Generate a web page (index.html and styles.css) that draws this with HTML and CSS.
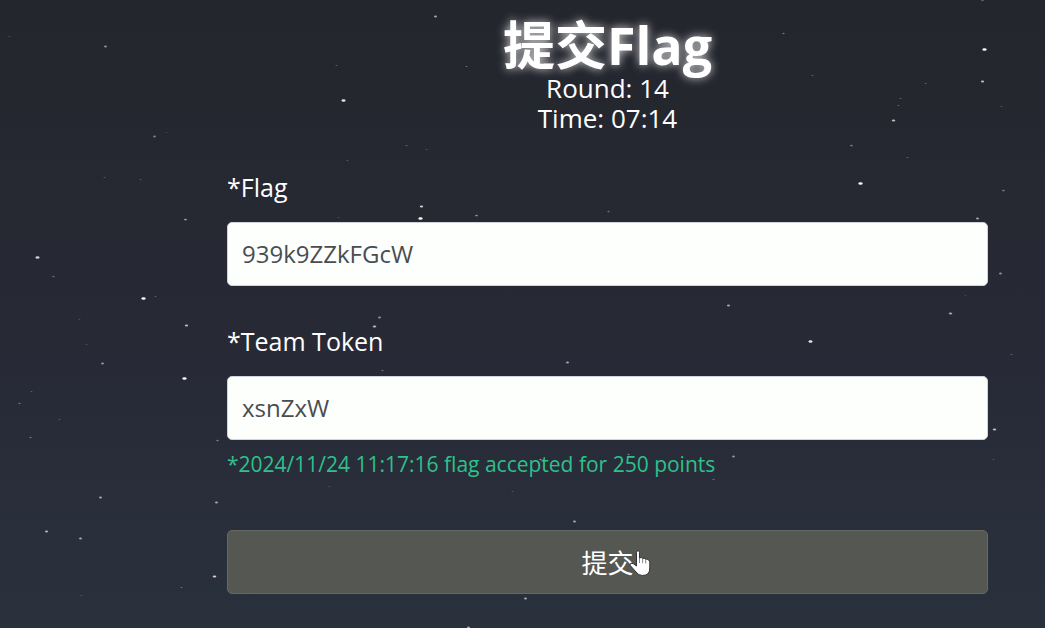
FILE: index.html
```
<!DOCTYPE html>
<html lang="zh-CN">
  <head>
    <meta charset="utf-8">
    <meta name="viewport" content="width=device-width, initial-scale=1">
    <title>提交Flag</title>
    <link rel="stylesheet" href="styles.css">
  </head>
  <body>
    <svg class="stars" aria-hidden="true"></svg>
    <main class="container">
      <header class="header">
        <h1>提交Flag</h1>
        <p>Round: <span id="round">14</span></p>
        <p>Time: <span id="time">07:14</span></p>
      </header>
      <form class="flag-form">
        <div class="form-group">
          <label for="flag">*Flag</label>
          <input type="text" id="flag" value="939k9ZZkFGcW" autocomplete="off" spellcheck="false">
        </div>
        <div class="form-group">
          <label for="token">*Team Token</label>
          <input type="text" id="token" value="xsnZxW" autocomplete="off" spellcheck="false">
          <p class="message" role="status">*2024/11/24 11:17:16 flag accepted for 250 points</p>
        </div>
        <button type="submit" class="submit-btn">
          <span class="submit-text">提交
            <svg class="pointer" viewBox="0 0 22 27" aria-hidden="true">
              <path d="M7.5 2.5 Q7.5 .7 9 .7 Q10.5 .7 10.5 2.5 V8 Q12.7 6.8 13.5 8.5 Q15.4 7.5 16.5 9.3 Q18.2 8.4 19.3 10 Q20.8 10.5 20.8 12.5 V18 Q20.8 25.5 13.5 25.5 Q9.5 25.5 7 22 L1.3 15.5 Q.5 13.8 2 13.2 Q3.8 12.7 7.5 16 Z" fill="#fff" stroke="#333" stroke-width="1"/>
              <path d="M10.5 8v5M13.6 8.7v4.5M16.7 9.5v4" fill="none" stroke="#666" stroke-width=".8"/>
            </svg>
          </span>
        </button>
      </form>
    </main>
    <script src="script.js"></script>
  </body>
</html>
```

FILE: styles.css
```
* {
  margin: 0;
  padding: 0;
  box-sizing: border-box;
}
body {
  min-height: 100vh;
  background: linear-gradient(#24262d, #272935 50%, #29313d) no-repeat;
  font-family: "Open Sans", "Noto Sans CJK SC", sans-serif;
  color: white;
}
.stars {
  position: absolute;
  top: 0;
  left: 0;
  width: 100%;
  height: 100%;
  z-index: -1;
}
.container {
  padding: 17px 57px 34px 227px;
}
.header {
  text-align: center;
  font-size: 26px;
  line-height: 30px;
  margin-bottom: 34px;
}
.header h1 {
  font-size: 52px;
  line-height: 56px;
  font-weight: bold;
  text-shadow: 0 0 10px rgba(255, 255, 255, 0.8);
}
.flag-form {
  display: flex;
  flex-direction: column;
}
.form-group {
  margin-bottom: 35px;
}
.form-group label {
  display: block;
  font-size: 25px;
  line-height: 40px;
  margin-bottom: 15px;
}
.form-group input {
  display: block;
  width: 100%;
  height: 64px;
  padding: 0 15px 2px 14px;
  border: 1px solid #ced4da;
  border-radius: 5px;
  background-color: #fdfffd;
  color: #4a4d50;
  font-family: inherit;
  font-size: 24px;
}
.message {
  color: #2fc08b;
  font-size: 21px;
  line-height: 30px;
  margin-top: 9px;
  padding-bottom: 16px;
}
.submit-btn {
  height: 64px;
  border: 1px solid #666963;
  border-radius: 5px;
  background-color: #555753;
  color: white;
  font-family: inherit;
  font-size: 26px;
  cursor: pointer;
}
.submit-text {
  position: relative;
}
.pointer {
  position: absolute;
  left: 48px;
  top: 5px;
  width: 22px;
  height: 27px;
}
```

FILE: script.js
```
// x, y, size, brightness
const stars = [
  [435, 16, 1.5, 0.6], [105, 46, 1.5, 0.5], [9, 36, 1, 0.2], [336, 65, 1, 0.3],
  [466, 66, 1, 0.4], [343, 100, 2, 0.9], [154, 136, 1.5, 0.4], [166, 132, 1, 0.15],
  [406, 145, 1, 0.35], [426, 149, 1, 0.25], [347, 160, 1, 0.25], [104, 177, 1, 0.25],
  [140, 179, 1, 0.25], [421, 206, 1.7, 0.8], [420, 218, 2.2, 1], [476, 215, 1.4, 0.5],
  [338, 217, 1, 0.2], [185, 219, 1.4, 0.6], [37, 257, 2, 0.8], [53, 276, 1.2, 0.35],
  [143, 298, 2.2, 1], [155, 296, 1, 0.3], [379, 317, 1.5, 0.5], [374, 326, 1.8, 0.7],
  [186, 325, 1.7, 0.7], [79, 319, 1, 0.2], [86, 344, 1, 0.2], [102, 363, 1.5, 0.5],
  [184, 378, 2.2, 1], [382, 370, 1.2, 0.3], [31, 391, 1, 0.25], [19, 403, 1.2, 0.35],
  [59, 419, 1.2, 0.2], [30, 437, 1.2, 0.35], [217, 440, 1.3, 0.4], [100, 497, 1.5, 0.6],
  [216, 502, 1.5, 0.6], [46, 531, 1.5, 0.7], [80, 538, 1.5, 0.6], [214, 576, 1.8, 0.8],
  [181, 587, 1, 0.35], [81, 595, 1, 0.2], [574, 521, 1.5, 0.6], [525, 598, 1.5, 0.6],
  [468, 627, 1.5, 0.6], [733, 456, 1.5, 0.5], [713, 479, 1.2, 0.3], [628, 454, 1.2, 0.4],
  [540, 459, 1.2, 0.5], [512, 491, 1, 0.2], [567, 362, 1.5, 0.6], [608, 211, 1.2, 0.35],
  [728, 305, 1.6, 0.6], [810, 341, 2, 0.9], [783, 33, 1.2, 0.35], [812, 75, 1, 0.3],
  [982, 0, 1.3, 0.3], [984, 49, 2.2, 1], [982, 81, 1.7, 0.7], [925, 83, 1, 0.3],
  [900, 98, 1, 0.3], [898, 105, 1, 0.3], [893, 120, 1.8, 0.7], [1001, 106, 1, 0.25],
  [851, 145, 1.4, 0.4], [907, 157, 1, 0.3], [860, 183, 2.2, 1], [1003, 190, 1.4, 0.4],
  [977, 218, 1.5, 0.6], [1000, 273, 1.5, 0.5], [950, 313, 1.8, 0.6], [1011, 354, 1, 0.3],
  [994, 429, 1.8, 0.7], [993, 459, 1, 0.25], [965, 295, 1, 0.15], [329, 486, 1, 0.2]
];
const sky = document.querySelector(".stars");

for(let i = 0; i < stars.length; i++) {
  const [x, y, size, alpha] = stars[i];
  const star = document.createElementNS("http://www.w3.org/2000/svg", "ellipse");
  star.setAttribute("cx", x + 0.5);
  star.setAttribute("cy", y + 0.5);
  star.setAttribute("rx", size);
  star.setAttribute("ry", size * 0.6);
  star.setAttribute("fill", `rgba(255, 250, 245, ${alpha})`);
  sky.appendChild(star);
}

document.querySelector(".flag-form").addEventListener("submit", (e) => e.preventDefault());
```
